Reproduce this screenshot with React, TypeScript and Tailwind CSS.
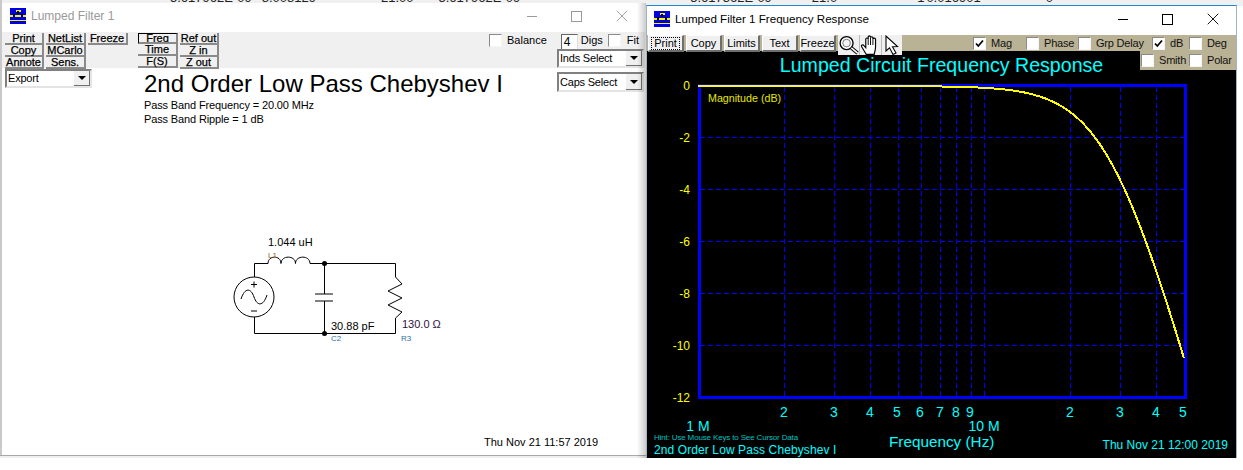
import React from "react";
import { X } from "lucide-react";

const ARIAL = "[font-family:'Liberation_Sans',Arial,sans-serif]";

// Response of the series L / shunt C + R network, 2nd order with f0 = 28.03 MHz
const freqToX = (mhz: number) => 698 + Math.log10(mhz) * 286;
const dbToY = (db: number) => 85.5 - db * 26;

const curvePoints = () => {
  const pts: string[] = [];
  for (let x = 698; x <= 1185; x += 2) {
    const mhz = Math.pow(10, (x - 698) / 286);
    const db = -10 * Math.log10(1 + Math.pow(mhz / 28.03, 4));
    pts.push(`${x},${(dbToY(db) + 0.5).toFixed(1)}`);
  }
  return pts.join(" ");
};

const GRID_X = [2, 3, 4, 5, 6, 7, 8, 9, 10, 20, 30, 40];
const X_LABELS = [
  { t: "2", x: 784 }, { t: "3", x: 834 }, { t: "4", x: 870 }, { t: "5", x: 897 },
  { t: "6", x: 920 }, { t: "7", x: 940 }, { t: "8", x: 956 }, { t: "9", x: 970 },
  { t: "2", x: 1070 }, { t: "3", x: 1120 }, { t: "4", x: 1156 }, { t: "5", x: 1183 },
];

const AppIcon = () => (
  <svg width="16" height="16" viewBox="0 0 16 16" className="shrink-0">
    <rect width="16" height="16" fill="#0000e0" />
    <rect y="7" width="16" height="2" fill="#f4f400" />
    <rect y="12" width="16" height="1" fill="#f4f400" />
    <rect x="6" y="2" width="5" height="2" fill="#f4f400" />
    <rect x="3" y="6" width="2" height="3" fill="#000" />
    <rect x="11" y="6" width="2" height="3" fill="#000" />
    <rect x="7" y="3" width="2" height="3" fill="#000" />
  </svg>
);

const WindowControls = ({ color }: { color: string }) => (
  <div className={`ml-auto flex items-center ${color}`}>
    <div className="w-[45px] flex justify-center"><div className="w-[10px] h-px bg-current" /></div>
    <div className="w-[45px] flex justify-center"><div className="w-[11px] h-[11px] border border-current" /></div>
    <div className="w-[46px] flex justify-center"><X size={20} strokeWidth={1.1} /></div>
  </div>
);

const ToolButton = ({ label, active }: { label: string; active?: boolean }) => (
  <div
    className={`h-[12px] w-full flex items-center justify-center text-[11px] leading-none [-webkit-text-stroke:0.25px_black] text-black bg-[#f0f0f0] border-b-2 border-r-2 border-b-[#8a8a8a] border-r-[#8a8a8a] ${
      active ? "overflow-hidden border-t border-l border-t-black border-l-black" : ""
    }`}
  >
    {label}
  </div>
);

const Dropdown = ({ label, className }: { label: string; className: string }) => (
  <div className={`flex items-center bg-white border-2 border-t-[#808080] border-l-[#808080] border-r-[#e4e4e4] border-b-[#e4e4e4] ${className}`}>
    <span className="flex-1 pl-[1px] text-[11px] tracking-[-0.2px] leading-none text-black">{label}</span>
    <div className="w-[16px] h-full flex items-center justify-center bg-[#f0f0f0] border-r border-b border-[#707070]">
      <div className="w-0 h-0 border-x-[4px] border-x-transparent border-t-[4px] border-t-black" />
    </div>
  </div>
);

const Check = ({ checked }: { checked?: boolean }) => (
  <div className="w-[13px] h-[13px] shrink-0 bg-white border border-t-[#8a8a8a] border-l-[#8a8a8a] border-r-[#f4f4f4] border-b-[#f4f4f4] flex items-center justify-center">
    {checked && (
      <svg width="9" height="9" viewBox="0 0 9 9">
        <path d="M1 4.5 L3.3 7 L8 1.5" fill="none" stroke="#000" strokeWidth="1.8" />
      </svg>
    )}
  </div>
);

const PlotCheck = ({ label, checked, className }: { label: string; checked?: boolean; className: string }) => (
  <div className={`flex items-center gap-[5px] text-[11px] tracking-[-0.2px] leading-none text-[#111] ${className}`}>
    <Check checked={checked} />
    <span className="whitespace-nowrap">{label}</span>
  </div>
);

const PlotButton = ({ label, dotted, className }: { label: string; dotted?: boolean; className: string }) => (
  <div className={`h-[17px] flex items-center justify-center bg-[#f0f0f0] border-t border-l border-t-white border-l-white border-r-2 border-b-2 border-r-[#6e6e6e] border-b-[#6e6e6e] text-[11px] leading-none text-black ${className}`}>
    <span className={dotted ? "outline-1 outline-dotted outline-black px-[2px]" : ""}>{label}</span>
  </div>
);

const Circuit = () => (
  <svg width="230" height="115" viewBox="225 235 230 115" className="ml-[223px] shrink-0">
    <g fill="none" stroke="#000" strokeWidth="1">
      <path d="M254.5 277 V263.5 H268" />
      <path d="M268 263.5 C268 255 281 255 281 263.5 C281 255 295.5 255 295.5 263.5 C295.5 255 310 255 310 263.5 H395.5 V277" />
      <path d="M395.5 277 L402 284 L388 291 L402 298 L388 305 L402 312 L395.5 318 V333.5 H254.5 V317" />
      <path d="M324.5 263.5 V294 M315 294 H333 M315 301 H333 M324.5 301 V333.5" />
      <circle cx="254" cy="297" r="20" />
      <path d="M241 299 C245 287 251 288 254 297 C257 306 263 307 267 295" />
      <path d="M251 284.5 H257 M254 281.5 V287.5 M251 311 H257" />
    </g>
    <circle cx="324.5" cy="263.5" r="2.5" fill="#000" />
    <circle cx="324.5" cy="333.5" r="2.5" fill="#000" />
    <g className={ARIAL}>
      <text x="268" y="246" fontSize="11" fill="#000">1.044 uH</text>
      <text x="268" y="258" fontSize="8" fill="#a0622a">L1</text>
      <text x="331" y="330" fontSize="11" fill="#000">30.88 pF</text>
      <text x="331" y="341" fontSize="8" fill="#2f6f9f">C2</text>
      <text x="402" y="328" fontSize="11" fill="#301040">130.0 Ω</text>
      <text x="401" y="341" fontSize="8" fill="#2f6f9f">R3</text>
    </g>
  </svg>
);

const LeftWindow = () => (
  <div className="absolute left-[2px] top-[3px] w-[643px] h-[452px] bg-white flex flex-col">
    <div className="h-[29px] shrink-0 flex items-center pl-[8px] pb-[3px]">
      <AppIcon />
      <span className="ml-[5px] text-[12px] text-[#999999]">Lumped Filter 1</span>
      <WindowControls color="text-[#9a9a9a]" />
    </div>

    <div className="h-[36px] shrink-0 bg-[#f0f0f0] flex pl-[3px] pt-[1px]">
      <div className="w-[39px] flex flex-col"><ToolButton label="Print" /><ToolButton label="Copy" /><ToolButton label="Annote" /></div>
      <div className="w-[40px] ml-[2px] flex flex-col"><ToolButton label="NetList" /><ToolButton label="MCarlo" /><ToolButton label="Sens." /></div>
      <div className="w-[40px] ml-[2px]"><ToolButton label="Freeze" /></div>
      <div className="w-[40px] ml-[10px] flex flex-col"><ToolButton label="Freq" active /><ToolButton label="Time" /><ToolButton label="F(S)" /></div>
      <div className="w-[39px] ml-[2px] flex flex-col"><ToolButton label="Ref out" /><ToolButton label="Z in" /><ToolButton label="Z out" /></div>
      <div className="ml-auto w-[155px] flex flex-col items-end mr-[1px]">
        <div className="h-[15px] w-full flex items-center text-[11px] leading-none text-black">
          <Check />
          <span className="ml-[5px]">Balance</span>
          <div className="ml-[14px] w-[17px] h-[16px] mt-[2px] bg-white border border-t-[#666] border-l-[#666] border-r-[#ddd] border-b-[#ddd] flex items-center pl-[2px] text-[12px]">4</div>
          <span className="ml-[3px]">Digs</span>
          <div className="ml-[5px]"><Check /></div>
          <span className="ml-[6px]">Fit</span>
        </div>
        <Dropdown label="Inds Select" className="w-[87px] h-[19px] mt-[1px]" />
      </div>
    </div>

    <div className="flex h-[167px] shrink-0">
      <div className="w-[142px] shrink-0 pl-[3px] pt-[1px]">
        <Dropdown label="Export" className="w-[87px] h-[19px]" />
      </div>
      <div className="flex-1 flex flex-col text-black">
        <div className="text-[24px] leading-[27px] mt-[2px] whitespace-nowrap">2nd Order Low Pass Chebyshev I</div>
        <div className="text-[11px] tracking-[-0.13px] leading-[14px] mt-[1px]">Pass Band Frequency = 20.00 MHz</div>
        <div className="text-[11px] tracking-[-0.13px] leading-[14px]">Pass Band Ripple = 1 dB</div>
      </div>
      <div className="w-[88px] shrink-0 pt-[4px]">
        <Dropdown label="Caps Select" className="w-[87px] h-[20px]" />
      </div>
    </div>

    <Circuit />

    <div className="mt-auto pb-[7px] pl-[482px] text-[11px] leading-[12px] text-black whitespace-nowrap">
      Thu Nov 21 11:57 2019
    </div>
  </div>
);

const Hand = () => (
  <svg width="22" height="22" viewBox="0 0 20 20">
    <path d="M6 19 L1.5 11.5 C0.8 10 2.8 9.2 3.8 10.5 L5.5 12.5 V4.5 C5.5 3 7.8 3 7.8 4.5 V2.5 C7.8 1 10 1 10 2.5 V3 C10 1.8 12.3 1.8 12.3 3 V4.5 C12.3 3.2 14.8 3.2 14.8 4.5 V12 C14.8 15 14 16 13.5 19 Z" fill="#fff" stroke="#000" strokeWidth="1.1" />
    <path d="M7.8 4.5 V10 M10 3 V10 M12.3 4.5 V10" stroke="#000" strokeWidth="0.9" />
  </svg>
);

const Magnifier = () => (
  <svg width="22" height="20" viewBox="0 0 22 20">
    <circle cx="9" cy="8" r="6.8" fill="#f4f4f4" stroke="#000" strokeWidth="1.4" />
    <circle cx="9" cy="8" r="5" fill="none" stroke="#fff" strokeWidth="1.2" />
    <circle cx="9" cy="8" r="4" fill="none" stroke="#555" strokeWidth="0.8" />
    <path d="M14 13 L20.5 18.5" stroke="#000" strokeWidth="3.6" />
    <path d="M14 13 L20.5 18.5" stroke="#fff" strokeWidth="1.6" />
  </svg>
);

const Arrow = () => (
  <svg width="20" height="20" viewBox="0 0 20 20">
    <path d="M4 1 V16 L7.5 12.8 L11 19.5 L14 18 L10.5 11.8 L15.5 11.5 Z" fill="#fff" stroke="#000" strokeWidth="1.1" />
  </svg>
);

const Plot = () => (
  <svg width="589" height="353" viewBox="647 79 589 353" className={`block ${ARIAL}`}>
    <g stroke="#0000ff" strokeWidth="1" strokeDasharray="5 3" shapeRendering="crispEdges">
      {GRID_X.map((m) => (
        <line key={m} x1={Math.round(freqToX(m)) + 0.5} x2={Math.round(freqToX(m)) + 0.5} y1="87" y2="397" />
      ))}
      {[-2, -4, -6, -8, -10].map((d) => (
        <line key={d} x1="700" x2="1184" y1={dbToY(d)} y2={dbToY(d)} />
      ))}
    </g>
    <rect x="699" y="85.5" width="486" height="312" fill="none" stroke="#0000ff" strokeWidth="3" shapeRendering="crispEdges" />
    <polyline points={curvePoints()} fill="none" stroke="#ffff00" strokeWidth="2" shapeRendering="crispEdges" />
    <g fill="#ffff00" fontSize="12" textAnchor="end">
      {[0, -2, -4, -6, -8, -10, -12].map((d) => (
        <text key={d} x="690" y={dbToY(d) + 4}>{d}</text>
      ))}
    </g>
    <text x="708" y="102" fontSize="10.7" fill="#e6e600">Magnitude (dB)</text>
    <g fill="#00ffff" fontSize="14" textAnchor="middle">
      {X_LABELS.map((l) => (
        <text key={l.x} x={l.x} y="417">{l.t}</text>
      ))}
      <text x="698" y="431">1 M</text>
      <text x="984" y="431">10 M</text>
    </g>
  </svg>
);

const RightWindow = () => (
  <div className="absolute left-[646px] top-[5px] w-[591px] h-[453px] bg-white border-x border-t border-x-[#9fb4c4] border-t-[#1a8ad8] flex flex-col">
    <div className="h-[29px] shrink-0 flex items-center pl-[7px] pb-[3px]">
      <AppIcon />
      <span className="ml-[5px] text-[11.6px] text-black">Lumped Filter 1 Frequency Response</span>
      <WindowControls color="text-black" />
    </div>

    <div className="h-[16px] shrink-0 bg-[#b9b295] flex items-start pl-[1px] relative z-10">
      <PlotButton label="Print" dotted className="w-[36px]" />
      <PlotButton label="Copy" className="w-[36px] ml-[2px]" />
      <PlotButton label="Limits" className="w-[36px] ml-[2px]" />
      <PlotButton label="Text" className="w-[36px] ml-[2px]" />
      <PlotButton label="Freeze" className="w-[36px] ml-[2px]" />
      <div className="ml-[2px] h-[20px] flex bg-[#f0f0f0]">
        <div className="w-[22px] flex items-center justify-center border-r border-[#bbb]"><Magnifier /></div>
        <div className="w-[22px] flex items-center justify-center border-r border-[#bbb]"><Hand /></div>
        <div className="w-[20px] flex items-center justify-center"><Arrow /></div>
      </div>
      <div className="ml-auto flex items-center h-[16px]">
        <PlotCheck label="Mag" checked className="w-[53px]" />
        <PlotCheck label="Phase" className="w-[52px]" />
        <PlotCheck label="Grp Delay" className="w-[74px]" />
        <PlotCheck label="dB" checked className="w-[37px]" />
        <PlotCheck label="Deg" className="w-[47px]" />
      </div>
    </div>

    <div className="flex-1 min-h-0 bg-black relative flex flex-col">
      <div className="absolute right-0 top-0 w-[96px] h-[19px] bg-[#b9b295] flex items-center pl-[1px]">
        <PlotCheck label="Smith" className="w-[48px]" />
        <PlotCheck label="Polar" className="w-[47px]" />
      </div>
      <div className="h-[28px] shrink-0 text-center text-[19.6px] leading-[28px] text-[#00ffff]">
        Lumped Circuit Frequency Response
      </div>
      <Plot />
      <div className="flex-1 min-h-0 flex pl-[7px] pr-[8px] text-[#00ffff]">
        <div className="w-[235px] flex flex-col pt-[1px]">
          <span className="text-[8px] tracking-[-0.15px] leading-[10px] text-[#00c0c0] whitespace-nowrap">Hint: Use Mouse Keys to See Cursor Data</span>
          <span className="text-[12px] tracking-[0.1px] leading-[14px] whitespace-nowrap">2nd Order Low Pass Chebyshev I</span>
        </div>
        <span className="text-[15.3px] leading-[18px] pt-[1px] whitespace-nowrap">Frequency (Hz)</span>
        <span className="ml-auto text-[12px] leading-[14px] pt-[6px] whitespace-nowrap">Thu Nov 21 12:00 2019</span>
      </div>
    </div>
  </div>
);

export default function App() {
  return (
    <div className={`relative w-[1243px] h-[470px] overflow-hidden bg-white ${ARIAL}`}>
      {/* spreadsheet sitting behind the two windows */}
      <div className="absolute inset-x-0 top-0 h-[6px] bg-[#f0f0f0] overflow-hidden text-[13px] leading-none text-[#222]">
        <div className="flex -mt-[9px] whitespace-pre">
          <span className="ml-[170px]">5.617962E-09</span>
          <span className="ml-[10px]">8.008129</span>
          <span className="ml-[65px]">21.00</span>
          <span className="ml-[25px]">5.617962E-09</span>
          <span className="ml-[170px]">5.617362E-09</span>
          <span className="ml-[40px]">21.0</span>
          <span className="ml-[80px]">1</span>
          <span className="ml-[2px]">0.016901</span>
          <span className="ml-[65px]">0</span>
        </div>
      </div>
      <div className="absolute left-0 top-0 w-[2px] h-[458px] bg-[#c9c9c9]" />
      <div className="absolute left-0 top-[455px] w-[646px] h-[3px] bg-[#f0f0f0] border-t border-[#a8a8a8] overflow-hidden text-[13px] leading-none text-[#222]">
        <div className="flex whitespace-pre">
          <span className="ml-[54px]">1.46</span>
          <span className="ml-[41px]">0.035</span>
          <span className="ml-[73px]">0.70</span>
          <span className="ml-[23px]">6.47271E-07</span>
          <span className="ml-[13px]">0.014000</span>
          <span className="ml-[167px]">1.46</span>
          <span className="ml-[14px]">6.4727</span>
        </div>
      </div>

      <LeftWindow />
      <div className="absolute left-[637px] top-[3px] w-[9px] h-[455px] bg-gradient-to-r from-transparent to-black/20" />
      <RightWindow />
    </div>
  );
}
